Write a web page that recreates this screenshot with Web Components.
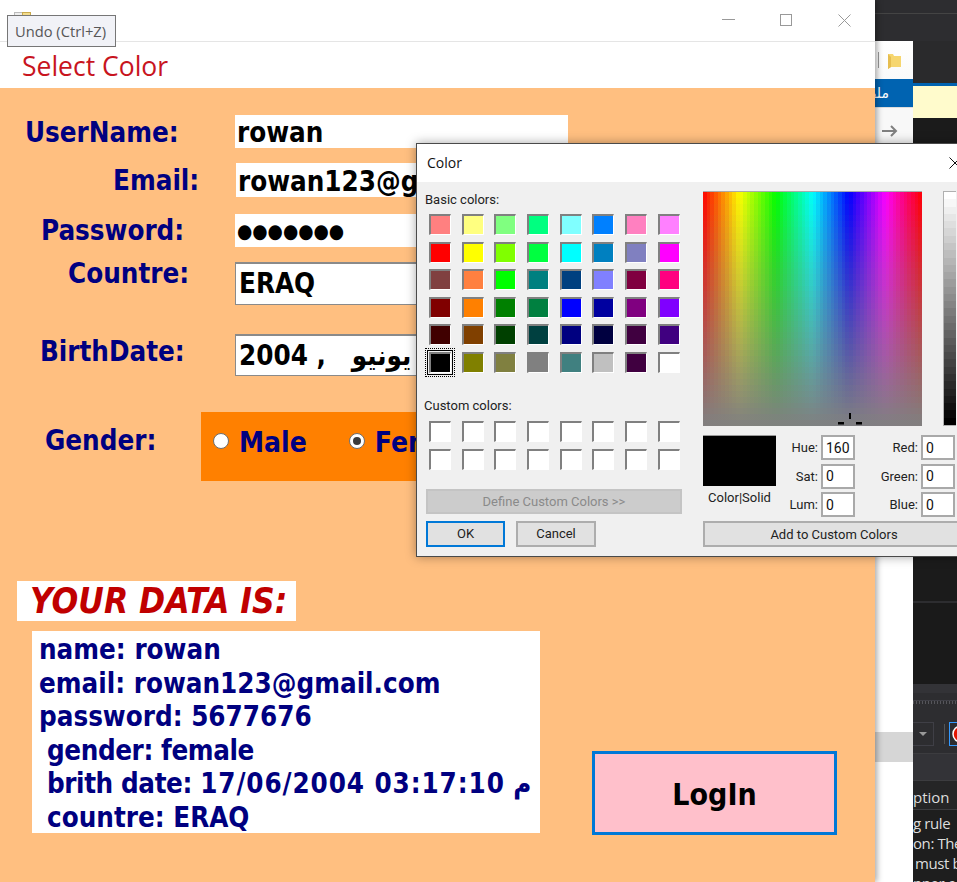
<!DOCTYPE html>
<html lang="en">
<head>
<meta charset="utf-8">
<title>Select Color</title>
<style>
html,body{margin:0;padding:0;background:#1e1e1e;}
</style>
</head>
<body>
<x-desktop>
  <x-backdrop></x-backdrop>
  <x-app-window>
    <x-login-form></x-login-form>
  </x-app-window>
  <x-color-dialog></x-color-dialog>
  <x-tooltip>Undo (Ctrl+Z)</x-tooltip>
</x-desktop>

<script>
function comp(name, css, html, setup){
  customElements.define(name, class extends HTMLElement{
    constructor(){
      super();
      const r=this.attachShadow({mode:'open'});
      r.innerHTML='<style>'+css+'</style>'+(typeof html==='function'?html(this):html);
    }
    connectedCallback(){ if(setup&&!this._done){this._done=true;setup(this);} }
  });
}
const BOLD='"DejaVu Sans Condensed","DejaVu Sans","Liberation Sans",sans-serif';
const UI='"Open Sans","Noto Sans",sans-serif';
const DLG='Roboto,"Open Sans",sans-serif';

comp('x-desktop',
 `:host{display:block;position:relative;width:957px;height:882px;overflow:hidden;background:#1e1e1e;}`,
 `<slot></slot>`);

comp('x-backdrop',
 `:host{display:flex;flex-direction:column;position:absolute;left:0;top:0;width:957px;height:882px;padding-left:875px;box-sizing:border-box;font-family:${UI};}
  .top{height:41px;flex:none;background:#2d2d30;display:flex;flex-direction:column;}
  .top i{display:block;height:13px;border-bottom:1px solid #444;}
  .main{flex:1;display:flex;min-height:0;}
  .a{width:38px;background:#fff;display:flex;flex-direction:column;flex:none;}
  .a>*{flex:none;}
  .b{flex:1;display:flex;flex-direction:column;background:#1a1a1a;overflow:hidden;}
  .b>*{flex:none;}
  .a1{height:38px;display:flex;align-items:center;gap:9px;padding-left:3px;box-sizing:border-box;background:linear-gradient(#fff,#fafafa);}
  .tick{width:1px;height:16px;background:#999;}
  .blue{height:28px;background:#0063b1;color:#fff;font-size:14px;display:flex;align-items:center;justify-content:flex-end;overflow:hidden;padding-right:24px;box-sizing:border-box;font-family:"DejaVu Sans",sans-serif;white-space:nowrap;}
  .a2{height:36px;display:flex;align-items:center;padding:10px 0 0 7px;background:#f8f8f8;border-top:1px solid #ddd;box-sizing:border-box;}
  .a3{height:1px;background:#333;}
  .a4{height:588px;background:#fff;}
  .a5{height:30px;background:#d6d6d6;}
  .a6{flex:1 !important;background:#fff;}
  .b1{height:42px;background:#2a2a2c;}
  .b2{height:3px;background:#0063b1;}
  .b3{height:32px;background:#fffbcc;}
  .b4{height:483px;background:#1b1b1b;}
  .b5{height:2px;background:#2d2d30;}
  .b6{height:81px;background:#1a1a1a;}
  .b7{height:31px;background:#2d2d30;border-top:9px solid #333337;box-sizing:border-box;display:flex;align-items:center;}
  .grip{display:block;width:100%;height:3px;margin-top:-4px;background:repeating-linear-gradient(90deg,#55555a 0 1px,transparent 1px 3px);border-top:1px solid #3f3f46;box-sizing:content-box;}
  .b8{height:38px;background:#2d2d30;display:flex;align-items:center;gap:10px;}
  .drop{width:20px;height:22px;border:1px solid #3f3f46;border-left:0;display:flex;align-items:center;justify-content:center;flex:none;}
  .drop b{width:0;height:0;border-left:4px solid transparent;border-right:4px solid transparent;border-top:4px solid #999;}
  .sep{width:1px;height:20px;background:#555;flex:none;}
  .err{width:24px;height:24px;border:1px solid #3399ff;box-sizing:border-box;margin-left:-6px;flex:none;display:flex;align-items:center;padding-left:2px;}
  .b9{height:27px;background:#333337;border-top:1px solid #3c3c3f;box-sizing:border-box;}
  .b10{height:30px;background:#252526;color:#ddd;font-size:15px;line-height:32px;border-top:1px solid #3c3c3f;border-bottom:1px solid #3c3c3f;box-sizing:border-box;white-space:nowrap;}
  .b11{flex:1 !important;background:#1e1e1e;color:#ddd;font-size:15px;line-height:20px;padding-top:3px;white-space:nowrap;letter-spacing:-.4px;}
  .b11 div:nth-child(3){padding-left:2px;}
 `,
 `<div class="top"><i></i></div>
  <div class="main">
   <div class="a">
    <div class="a1"><span class="tick"></span>
      <svg width="13" height="17" viewBox="0 0 13 17"><path d="M0 2h5l1 2h7v11H3l-3 2z" fill="#f6d66f"/><path d="M0 2v15l3-2V5z" fill="#e6bd4f"/></svg>
    </div>
    <div class="blue">ملف</div>
    <div class="a2"><svg width="16" height="12" viewBox="0 0 16 12"><path d="M0 6h14M9 1l5 5-5 5" fill="none" stroke="#808080" stroke-width="2"/></svg></div>
    <div class="a3"></div>
    <div class="a4"></div><div class="a5"></div><div class="a6"></div>
   </div>
   <div class="b">
    <div class="b1"></div><div class="b2"></div><div class="b3"></div><div class="b4"></div><div class="b5"></div><div class="b6"></div>
    <div class="b7"><span class="grip"></span></div>
    <div class="b8"><span class="drop"><b></b></span><span class="sep"></span>
      <span class="err"><svg width="18" height="18" viewBox="0 0 18 18"><circle cx="9" cy="9" r="8" fill="#e51400" stroke="#fff" stroke-width="1.5"/><path d="M6 6l6 6M12 6l-6 6" stroke="#fff" stroke-width="2"/></svg></span>
    </div>
    <div class="b9"></div>
    <div class="b10">ption</div>
    <div class="b11"><div>g rule</div><div>on: The</div><div>must b</div><div>nner c</div></div>
   </div>
  </div>`);

comp('x-app-window',
 `:host{display:flex;flex-direction:column;position:absolute;left:0;top:0;width:875px;height:882px;background:#fff;box-shadow:2px 0 6px rgba(0,0,0,.35);}
  .title{height:41px;border-bottom:1px solid #e5e5e5;display:flex;align-items:flex-start;flex:none;}
  .ico{margin:12px 0 0 14px;}
  .ctrl{margin-left:auto;display:flex;padding-top:14px;padding-right:24px;gap:45px;}
  .strip{height:46px;flex:none;display:flex;align-items:center;padding:2px 0 0 22px;box-sizing:border-box;color:#c8141e;font:26.5px/1 ${UI};}
  .body{flex:1;min-height:0;}
 `,
 `<div class="title">
    <svg class="ico" width="18" height="16" viewBox="0 0 18 16"><rect x="0.5" y="0.5" width="8" height="14" fill="#eee" stroke="#bbb"/><rect x="8.5" y="0.5" width="8" height="14" fill="#f3dc8c" stroke="#c9a94c"/></svg>
    <div class="ctrl">
      <svg width="13" height="13" viewBox="0 0 13 13"><path d="M0 5.5h13" stroke="#999" fill="none"/></svg>
      <svg width="13" height="13" viewBox="0 0 13 13"><rect x="0.5" y="0.5" width="11" height="11" stroke="#999" fill="none"/></svg>
      <svg width="13" height="13" viewBox="0 0 13 13"><path d="M0.5 0.5l12 12M12.5 0.5l-12 12" stroke="#999" fill="none"/></svg>
    </div>
  </div>
  <div class="strip">Select Color</div>
  <div class="body"><slot></slot></div>`);

comp('x-form-row',
 `:host{display:grid;grid-template-columns:var(--col,235px) 1fr;height:var(--h);margin-top:var(--gap);font:bold 27.5px/30px ${BOLD};color:#000080;}
  .l{padding-left:var(--pad);margin-top:var(--lt,0);white-space:nowrap;}
  .f{min-height:0;}
 `,
 `<div class="l"><slot name="label"></slot></div><div class="f"><slot></slot></div>`);

comp('x-text-box',
 `:host{display:block;height:100%;box-sizing:border-box;width:var(--w,333px);background:#fff;color:#000;font:bold 27.5px/1 ${BOLD};white-space:pre;overflow:hidden;padding:var(--pt,4px) 0 0 var(--pl,2px);}
  :host([sunken]){border:1px solid #8a8a8a;border-top-width:2px;}
 `,`<slot></slot>`);

comp('x-radio',
 `:host{display:inline-flex;align-items:center;gap:10px;color:#000080;font:bold 28px/1 ${BOLD};white-space:nowrap;}
  .dot{width:14px;height:14px;border-radius:50%;border:1px solid #6e6e6e;background:#fff;display:flex;align-items:center;justify-content:center;flex:none;margin-bottom:4px;}
  :host([checked]) .dot::after{content:"";width:8px;height:8px;border-radius:50%;background:#3a3a3a;}
 `,`<span class="dot"></span><slot></slot>`);

comp('x-login-form',
 `:host{display:flex;flex-direction:column;height:100%;background:#ffbf80;box-sizing:border-box;padding-top:27px;font-family:${BOLD};}
  .panel{height:69px;width:360px;background:#ff8000;display:flex;align-items:center;padding:0 0 8px 12px;gap:42px;box-sizing:border-box;}
  .head{margin:100px 0 0 17px;width:279px;height:40px;background:#fff;color:#c00000;font:italic bold 35px/40px ${BOLD};padding-left:13px;box-sizing:border-box;white-space:nowrap;}
  .bottom{display:flex;margin-top:10px;padding-left:32px;align-items:flex-start;}
  .data{width:508px;height:202px;background:#fff;color:#000080;font:bold 27.5px/33.6px ${BOLD};padding:2px 0 0 7px;box-sizing:border-box;white-space:pre;}
  .data .s{padding-left:8px;}
  .data .n{letter-spacing:.9px;}
  .data .t{letter-spacing:-.4px;}
  button{margin:120px 0 0 52px;width:245px;height:84px;background:#ffc0cb;border:3px solid #0078d7;font:bold 30px/1 ${BOLD};color:#000;padding:3px 0 0;}
  .pw{font-size:19.5px;}
 `,
 `<x-form-row style="--h:33px;--gap:0px;--pad:25px;--lt:2px"><span slot="label">UserName:</span><x-text-box>rowan</x-text-box></x-form-row>
  <x-form-row style="--h:34px;--gap:15px;--pad:113px;--col:236px;--lt:2px"><span slot="label">Email:</span><x-text-box style="--pt:5px">rowan123@gmail.com</x-text-box></x-form-row>
  <x-form-row style="--h:33px;--gap:17px;--pad:41px;--lt:1px"><span slot="label">Password:</span><x-text-box style="--pt:1px"><span class="pw">●●●●●●●</span></x-text-box></x-form-row>
  <x-form-row style="--h:43px;--gap:15px;--pad:68px;--lt:-4px"><span slot="label">Countre:</span><x-text-box sunken style="--pt:6px;--pl:3px">ERAQ</x-text-box></x-form-row>
  <x-form-row style="--h:42px;--gap:29px;--pad:40px;--lt:2px"><span slot="label">BirthDate:</span><x-text-box sunken style="--pt:6px;--pl:3px">2004 ,   يونيو</x-text-box></x-form-row>
  <x-form-row style="--h:69px;--gap:36px;--pad:45px;--col:201px;--lt:13px"><span slot="label">Gender:</span>
    <div class="panel"><x-radio>Male</x-radio><x-radio checked>Female</x-radio></div>
  </x-form-row>
  <div class="head">YOUR DATA IS:</div>
  <div class="bottom">
    <div class="data"><div>name: rowan</div><div>email: rowan123@gmail.com</div><div>password: 5677676</div><div class="s"><span class="t">gender: female</span></div><div class="s"><span class="t">brith date: </span><span class="n">17/06/2004 03:17:10</span> م</div><div class="s">countre: ERAQ</div></div>
    <button>LogIn</button>
  </div>`);

comp('x-swatch-grid',
 `:host{display:grid;grid-template-columns:repeat(8,22px);column-gap:10.67px;row-gap:var(--rg,6.6px);grid-auto-rows:21px;}
  i{display:block;box-sizing:border-box;border-style:solid;border-width:2px 1px 1px 2px;border-color:#808080 #fff #fff #808080;position:relative;}
  i.sel::before{content:"";position:absolute;left:-4px;top:-4px;right:-3px;bottom:-3px;border:1px solid #000;}
  i.sel::after{content:"";position:absolute;left:-6px;top:-6px;right:-5px;bottom:-5px;border:1px dotted #000;}
 `,
 h=>{const c=(h.getAttribute('colors')||'').split(' ');
     return c.map((x,i)=>`<i style="background:${x}" class="${i===+h.getAttribute('sel')&&h.hasAttribute('sel')?'sel':''}"></i>`).join('');});

comp('x-win-button',
 `:host{display:flex;align-items:center;justify-content:center;box-sizing:border-box;background:#e1e1e1;border:2px solid #adadad;font:13px/1 ${DLG};color:#222;height:26px;white-space:nowrap;}
  :host([primary]){border-color:#0078d7;}
  :host([disabled]){background:#ccc;border-color:#c4c4c4;color:#8a8a8a;}
 `,`<slot></slot>`);

comp('x-num-field',
 `:host{display:flex;align-items:center;gap:3px;justify-content:flex-end;font:13px/1 ${DLG};color:#222;height:25px;}
  .v{width:var(--iw,34px);height:25px;box-sizing:border-box;border:2px solid #a9a9a9;background:#fff;font-size:14px;display:flex;align-items:center;padding-left:3px;color:#111;flex:none;}
 `,
 h=>`<span>${h.getAttribute('label')}</span><span class="v">${h.getAttribute('value')}</span>`);

comp('x-color-dialog',
 `:host{display:flex;flex-direction:column;position:absolute;left:416px;top:143px;width:560px;height:414px;box-sizing:border-box;background:#f0f0f0;border:1px solid #4a4a4a;box-shadow:0 0 10px rgba(0,0,0,.35);font:13px/1 ${DLG};color:#222;}
  .bar{height:38px;flex:none;background:#fff;display:flex;align-items:center;padding-left:10px;font:14px/1 ${UI};color:#111;position:relative;}
  .bar svg{position:absolute;left:532px;top:13px;}
  .wrap{flex:1;display:flex;padding-left:7px;}
  .left{width:279px;flex:none;display:flex;flex-direction:column;}
  .lbl{height:15px;white-space:nowrap;}
  .right{flex:1;display:flex;flex-direction:column;padding-top:9px;}
  .sw{display:flex;gap:21px;height:235px;flex:none;}
  .spec{width:219px;height:235px;position:relative;overflow:hidden;border-top:1px solid #aaa;box-sizing:border-box;}
  .lum{width:13px;height:235px;box-sizing:border-box;border:1px solid #b0b0b0;border-right:0;}
  .cross{position:absolute;left:135px;top:220px;}
  .row2{display:flex;margin-top:9px;flex:none;height:82px;}
  .pv{width:73px;flex:none;display:flex;flex-direction:column;align-items:center;}
  .pv i{display:block;width:73px;height:51px;background:#000;border-top:1px solid #999;box-sizing:border-box;flex:none;}
  .pv span{margin-top:5px;white-space:nowrap;}
  .col1{width:79px;flex:none;display:flex;flex-direction:column;gap:3.5px;}
  .col2{width:100px;flex:none;display:flex;flex-direction:column;gap:3.5px;}
 `,
 `<div class="bar">Color<svg width="12" height="12" viewBox="0 0 12 12"><path d="M.5.5l11 11M11.5.5l-11 11" stroke="#111" fill="none"/></svg></div>
  <div class="wrap">
   <div class="left">
     <div class="lbl" style="margin-top:11px;margin-left:1px">Basic colors:</div>
     <x-swatch-grid style="margin:6px 0 0 5px" sel="40" colors="#FF8080 #FFFF80 #80FF80 #00FF80 #80FFFF #0080FF #FF80C0 #FF80FF #FF0000 #FFFF00 #80FF00 #00FF40 #00FFFF #0080C0 #8080C0 #FF00FF #804040 #FF8040 #00FF00 #008080 #004080 #8080FF #800040 #FF0080 #800000 #FF8000 #008000 #008040 #0000FF #0000A0 #800080 #8000FF #400000 #804000 #004000 #004040 #000080 #000040 #400040 #400080 #000000 #808000 #808040 #808080 #408080 #C0C0C0 #400040 #FFFFFF"></x-swatch-grid>
     <div class="lbl" style="margin-top:26px">Custom colors:</div>
     <x-swatch-grid style="margin:7px 0 0 5px;--rg:7px" colors="#fff #fff #fff #fff #fff #fff #fff #fff #fff #fff #fff #fff #fff #fff #fff #fff"></x-swatch-grid>
     <x-win-button disabled style="margin:19px 0 0 2px;width:256px;height:25px">Define Custom Colors &gt;&gt;</x-win-button>
     <div style="display:flex;gap:11px;margin:7px 0 0 2px">
       <x-win-button primary style="width:79px">OK</x-win-button>
       <x-win-button style="width:80px">Cancel</x-win-button>
     </div>
   </div>
   <div class="right">
     <div class="sw">
       <div class="spec" id="spec"><svg class="cross" width="30" height="15" viewBox="0 0 30 15"><path d="M11 1v6h2V1zM0 10h6v2.5H0zM18 10h6v2.5h-6z" fill="#000"/></svg></div>
       <div class="lum" id="lum"></div>
     </div>
     <div class="row2">
       <div class="pv"><i></i><span>Color|Solid</span></div>
       <div class="col1"><x-num-field label="Hue:" value="160"></x-num-field><x-num-field label="Sat:" value="0"></x-num-field><x-num-field label="Lum:" value="0"></x-num-field></div>
       <div class="col2"><x-num-field label="Red:" value="0"></x-num-field><x-num-field label="Green:" value="0"></x-num-field><x-num-field label="Blue:" value="0"></x-num-field></div>
     </div>
     <x-win-button style="margin-top:4px;width:262px">Add to Custom Colors</x-win-button>
   </div>
  </div>`,
 h=>{
  const r=h.shadowRoot;
  const hsl=(d,s,l)=>`hsl(${d},${s}%,${l}%)`;
  const N=60,M=40;
  let hs=[];
  for(let i=0;i<N;i++){const a=i/N*100,b=(i+1)/N*100;hs.push(`${hsl((i+.5)/N*360,100,50)} ${a}% ${b}%`);}
  let vs=[];
  for(let j=0;j<M;j++){const a=j/M*100,b=(j+1)/M*100;const o=((j+.5)/M).toFixed(3);vs.push(`rgba(128,128,128,${o}) ${a}% ${b}%`);}
  r.getElementById('spec').style.background=`linear-gradient(to bottom,${vs.join(',')}),linear-gradient(to right,${hs.join(',')})`;
  let ls=[];const L=32;
  for(let k=0;k<L;k++){const v=Math.round(255*(1-k/(L-1)));ls.push(`rgb(${v},${v},${v}) ${k/L*100}% ${(k+1)/L*100}%`);}
  r.getElementById('lum').style.background=`linear-gradient(to bottom,${ls.join(',')})`;
 });

comp('x-tooltip',
 `:host{display:flex;align-items:center;position:absolute;left:7px;top:15px;width:109px;height:32px;box-sizing:border-box;background:#f1f2f7;border:1px solid #767676;padding-left:7px;font:14.7px/1 ${UI};color:#575757;white-space:nowrap;}`,
 `<slot></slot>`);
</script>
</body>
</html>
